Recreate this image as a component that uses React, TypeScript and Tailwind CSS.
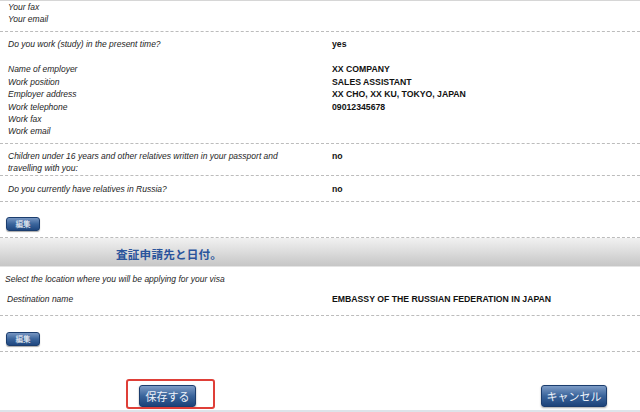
import React from "react";

const FONT = { fontFamily: '"Liberation Sans", Arial, "Noto Sans CJK JP", sans-serif' };
const CJK = { fontFamily: '"Noto Sans CJK JP", "Liberation Sans", sans-serif' };

function Dash() {
  return <div className="h-0 border-t border-dashed border-[#bcbcbc]" />;
}

function Label({ children }: { children: React.ReactNode }) {
  return <div className="italic text-[8.5px] leading-[12.4px] text-[#1e1e1e]">{children}</div>;
}

function Value({ children }: { children?: React.ReactNode }) {
  return <div className="font-bold text-[8.7px] leading-[12.4px] text-[#111]">{children ?? "\u00a0"}</div>;
}

function EditButton() {
  return (
    <button
      className="w-[34px] h-[14px] rounded-[3px] border border-[#1b3d6e] bg-linear-to-b from-[#7796c2] via-[#3b659c] to-[#1f4780] text-white text-[7.5px] leading-[12px] shadow-[0_1px_1px_rgba(0,0,0,0.35)]"
      style={CJK}
    >
      編集
    </button>
  );
}

function BigButton({ children, w }: { children: React.ReactNode; w: string }) {
  return (
    <button
      className={`${w} h-[22px] rounded-[3px] border border-[#1b3d6e] bg-linear-to-b from-[#7d9cc6] via-[#3a649b] to-[#1c437a] text-[#eef3fa] text-[11px] leading-[20px] shadow-[0_1px_2px_rgba(0,0,0,0.35)]`}
      style={CJK}
    >
      {children}
    </button>
  );
}

export default function App() {
  return (
    <div className="w-[640px] h-[412px] bg-white overflow-hidden flex flex-col" style={FONT}>
      <div className="h-[1px] bg-[#d6d6d6]" />
      {/* block 1 */}
      <div className="h-[30px] pl-2 pt-0">
        <Label>Your fax</Label>
        <Label>Your email</Label>
      </div>
      <Dash />
      {/* block 2 */}
      <div className="h-[111px] pl-2 pt-[6px] grid grid-cols-[324px_1fr] content-start">
        <Label>Do you work (study) in the present time?</Label>
        <Value>yes</Value>
        <div className="h-[13px] col-span-2" />
        <Label>Name of employer</Label>
        <Value>XX COMPANY</Value>
        <Label>Work position</Label>
        <Value>SALES ASSISTANT</Value>
        <Label>Employer address</Label>
        <Value>XX CHO, XX KU, TOKYO, JAPAN</Value>
        <Label>Work telephone</Label>
        <Value>09012345678</Value>
        <Label>Work fax</Label>
        <Value />
        <Label>Work email</Label>
        <Value />
      </div>
      <Dash />
      {/* block 3 */}
      <div className="h-[31px] pl-2 pt-[6px] grid grid-cols-[324px_1fr] content-start">
        <Label>
          Children under 16 years and other relatives written in your passport and
          <br />
          travelling with you:
        </Label>
        <Value>no</Value>
      </div>
      <Dash />
      {/* block 4 */}
      <div className="h-[25px] pl-2 pt-[7px] grid grid-cols-[324px_1fr] content-start">
        <Label>Do you currently have relatives in Russia?</Label>
        <Value>no</Value>
      </div>
      <Dash />
      <div className="h-[35px] pl-[6px] pt-[8px]">
        <EditButton />
      </div>
      <Dash />
      {/* header */}
      <div className="h-[29px] bg-linear-to-b from-[#f1f1f1] via-[#dcdcdc] to-[#c6c6c6] border-b border-[#e4e4e4] flex items-center pl-[116px] pt-[5px]">
        <span className="text-[11.6px] font-bold text-[#2a549c] tracking-[0.2px]" style={CJK}>
          査証申請先と日付。
        </span>
      </div>
      <div className="h-[48px] pl-[5px] pt-[6px]">
        <Label>Select the location where you will be applying for your visa</Label>
        <div className="grid grid-cols-[325px_1fr] pl-[2px] mt-[8px]">
          <Label>Destination name</Label>
          <Value>EMBASSY OF THE RUSSIAN FEDERATION IN JAPAN</Value>
        </div>
      </div>
      <Dash />
      <div className="h-[35px] pl-[6px] pt-[9px]">
        <EditButton />
      </div>
      <Dash />
      <div className="flex-1 relative">
        <div className="absolute left-[126px] top-[27px] w-[89px] h-[30px] rounded-[3px] border-2 border-[#df3f38]" />
        <div className="flex items-start pt-[32px]">
          <div className="ml-[139px]">
            <BigButton w="w-[57px]">保存する</BigButton>
          </div>
          <div className="ml-auto mr-[33px]">
            <BigButton w="w-[66px]">キャンセル</BigButton>
          </div>
        </div>
      </div>
      <div className="h-[2px] bg-[#dde4ea]" />
    </div>
  );
}
